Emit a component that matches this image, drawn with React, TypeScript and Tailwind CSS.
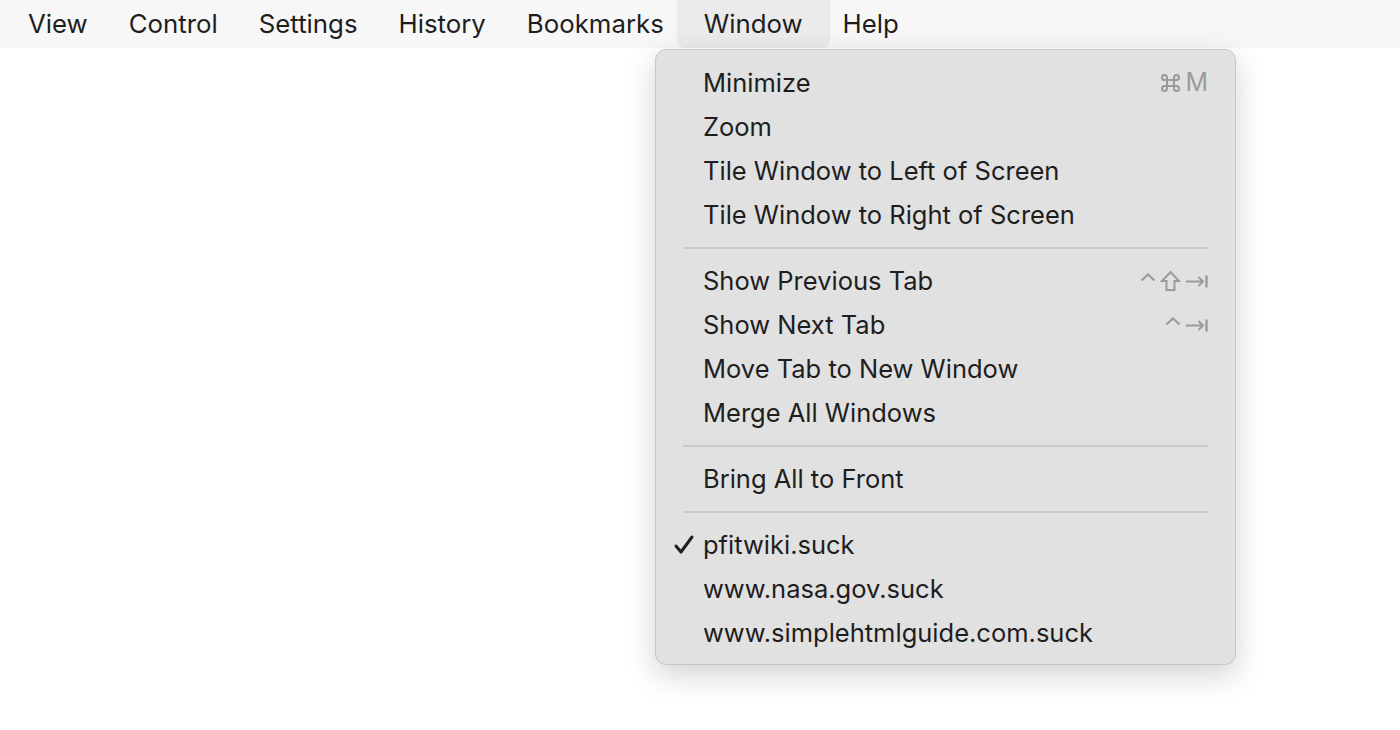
import React from "react";

const font = { fontFamily: "Inter, 'Noto Sans', sans-serif" };

const Cmd = () => (
  <svg width="23" height="22" viewBox="0 0 23 22" fill="none" stroke="currentColor" strokeWidth="2">
    <path d="M8 7.5v7M15 7.5v7M7.5 8h8M7.5 14h8" />
    <path d="M8 8H5.5A2.5 2.5 0 1 1 8 5.5V8ZM15 8V5.5A2.5 2.5 0 1 1 17.5 8H15ZM8 14v2.5A2.5 2.5 0 1 1 5.5 14H8ZM15 14h2.5A2.5 2.5 0 1 1 15 16.5V14Z" />
  </svg>
);

const Ctrl = () => (
  <svg width="16" height="22" viewBox="0 0 16 22" fill="none" stroke="currentColor" strokeWidth="2.2">
    <path d="M1.5 10.5L8 4.5l6.5 6" />
  </svg>
);

const Shift = () => (
  <svg width="21" height="22" viewBox="0 0 21 22" fill="none" stroke="currentColor" strokeWidth="2">
    <path d="M10.5 2L2 11h4.5v9h8v-9H19Z" strokeLinejoin="miter" />
  </svg>
);

const TabKey = () => (
  <svg width="23" height="22" viewBox="0 0 23 22" fill="none" stroke="currentColor" strokeWidth="2">
    <path d="M1 11.5h17M13.5 7l4.5 4.5-4.5 4.5" />
    <path d="M21.5 5.5v12" strokeWidth="2.4" />
  </svg>
);

type Item = { label: string; keys?: React.ReactNode; checked?: boolean };

const groups: Item[][] = [
  [
    {
      label: "Minimize",
      keys: (
        <span className="flex items-center gap-[3px]">
          <Cmd />
          <span>M</span>
        </span>
      ),
    },
    { label: "Zoom" },
    { label: "Tile Window to Left of Screen" },
    { label: "Tile Window to Right of Screen" },
  ],
  [
    {
      label: "Show Previous Tab",
      keys: (
        <span className="flex items-center gap-[4px]">
          <Ctrl />
          <Shift />
          <TabKey />
        </span>
      ),
    },
    {
      label: "Show Next Tab",
      keys: (
        <span className="flex items-center gap-[4px]">
          <Ctrl />
          <TabKey />
        </span>
      ),
    },
    { label: "Move Tab to New Window" },
    { label: "Merge All Windows" },
  ],
  [{ label: "Bring All to Front" }],
  [
    { label: "pfitwiki.suck", checked: true },
    { label: "www.nasa.gov.suck" },
    { label: "www.simplehtmlguide.com.suck" },
  ],
];

const menus = ["View", "Control", "Settings", "History", "Bookmarks", "Window", "Help"];

export default function App() {
  return (
    <div className="w-[1400px] h-[730px] bg-white text-[#1e1e1e] overflow-hidden relative" style={font}>
      <div className="h-[48px] bg-[#f7f7f7] flex items-stretch pl-[7.5px]">
        {menus.map(m =>
          m === "Window" ? (
            <div
              key={m}
              className="px-[27px] -mx-[7.5px] flex items-center text-[25.8px] bg-[#ebebeb] rounded-b-[8px]"
            >
              {m}
            </div>
          ) : (
            <div key={m} className="px-[20.5px] flex items-center text-[25.8px]">
              {m}
            </div>
          )
        )}
      </div>

      <div className="absolute left-[655px] top-[49px] w-[581px] bg-[#e1e1e1] border border-[#c6c6c6] rounded-[11px] shadow-[0_10px_30px_rgba(0,0,0,0.18)] pt-[11px] pb-[9px] px-[27px]">
        {groups.map((g, gi) => (
          <div key={gi}>
            {gi > 0 && (
              <div className="h-[22px] flex items-center">
                <div className="w-full h-[2px] bg-[#c9c9c9]" />
              </div>
            )}
            {g.map(it => (
              <div key={it.label} className="h-[44px] flex items-center relative pl-[20px] text-[25.5px]">
                {it.checked && (
                  <span className="absolute left-[-10px] top-[11px]">
                    <svg width="22" height="22" viewBox="0 0 22 22" fill="none" stroke="currentColor" strokeWidth="3" strokeLinecap="round" strokeLinejoin="round">
                      <path d="M3 12l5 6L19 3" />
                    </svg>
                  </span>
                )}
                <span className="flex-1">{it.label}</span>
                {it.keys && <span className="text-[#9b9b9b] text-[25px] flex items-center">{it.keys}</span>}
              </div>
            ))}
          </div>
        ))}
      </div>
    </div>
  );
}
